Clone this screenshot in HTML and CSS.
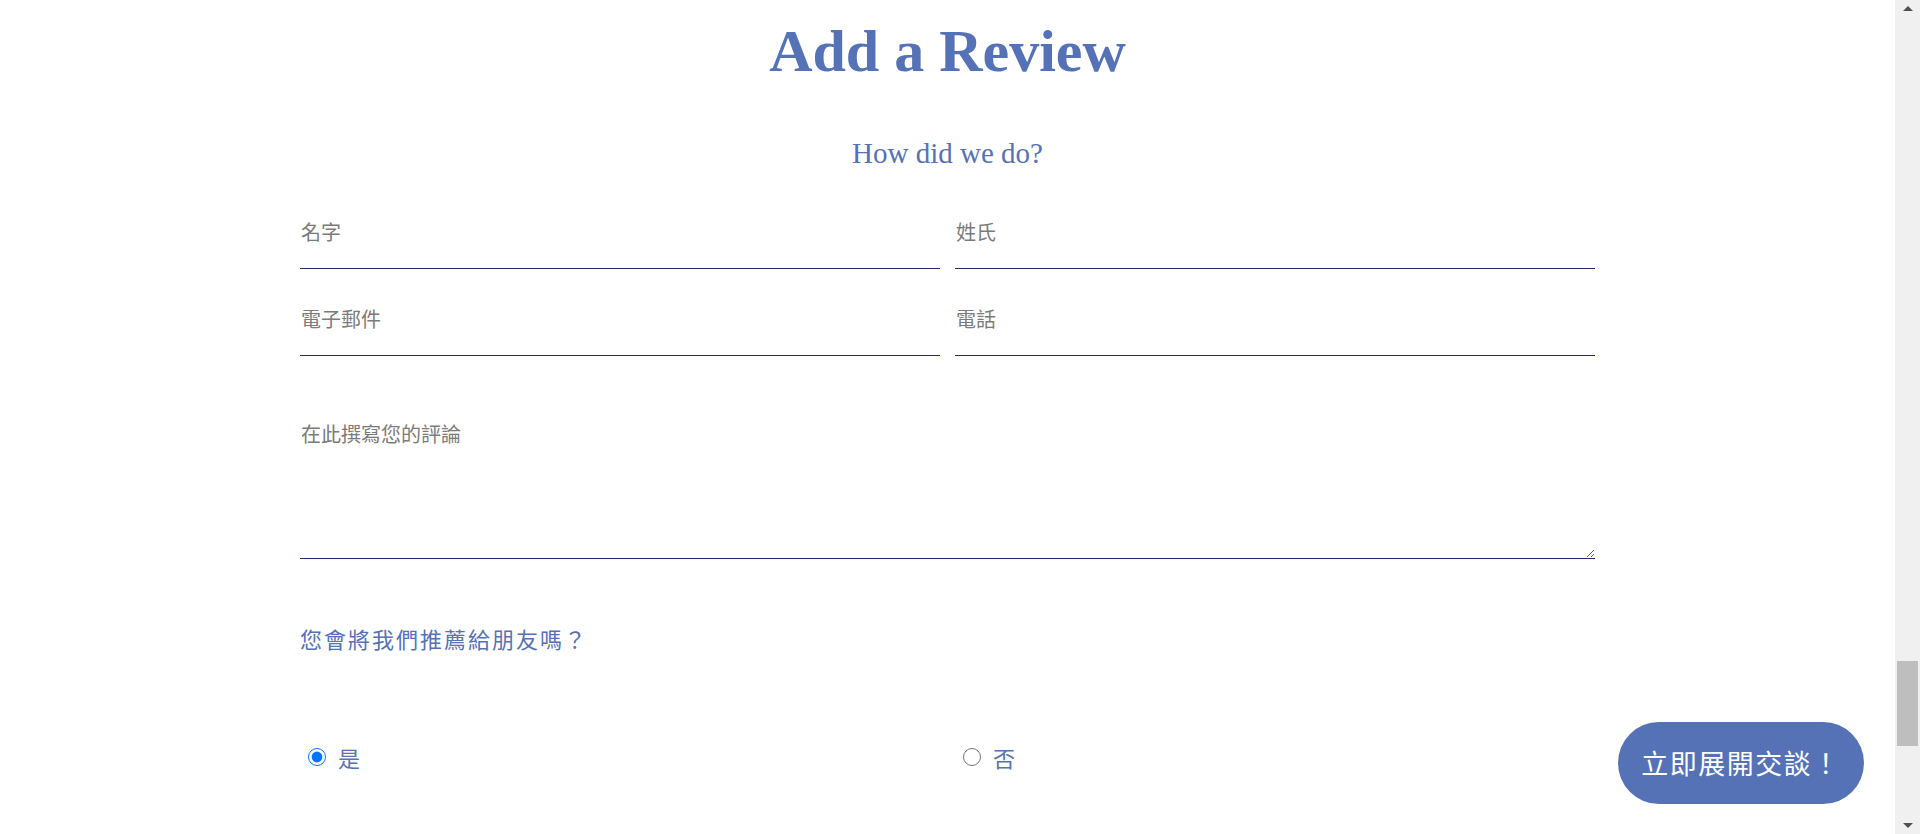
FILE: index.html
```html
<!DOCTYPE html>
<html lang="zh-Hant">
<head>
<meta charset="utf-8">
<title>Add a Review</title>
<link rel="stylesheet" href="styles.css">
</head>
<body>
<div class="page">
  <main class="content">
    <section class="review">
      <h1 class="title">Add a Review</h1>
      <p class="subtitle">How did we do?</p>
      <form class="form">
        <div class="row row-first">
          <input class="field" type="text" placeholder="名字">
          <input class="field" type="text" placeholder="姓氏">
        </div>
        <div class="row row-second">
          <input class="field" type="email" placeholder="電子郵件">
          <input class="field" type="tel" placeholder="電話">
        </div>
        <textarea class="field area" placeholder="在此撰寫您的評論"></textarea>
        <p class="question">您會將我們推薦給朋友嗎？</p>
        <div class="row radios">
          <label class="choice"><input class="radio" type="radio" name="rec" checked><span>是</span></label>
          <label class="choice"><input class="radio" type="radio" name="rec"><span>否</span></label>
        </div>
      </form>
    </section>
  </main>
  <div class="scrollbar">
    <div class="sb-btn"><span class="arrow-up"></span></div>
    <div class="sb-track"><div class="sb-thumb"></div></div>
    <div class="sb-btn"><span class="arrow-down"></span></div>
  </div>
</div>
<button class="chat" type="button">立即展開交談！</button>
</body>
</html>
```
FILE: styles.css
```css
html, body {
  margin: 0;
  padding: 0;
  height: 834px;
  overflow: hidden;
  background: #ffffff;
}

.page {
  display: flex;
  height: 834px;
}

.content {
  flex: 1;
  min-width: 0;
}

.review {
  width: 1295px;
  margin: 0 auto;
}

.title {
  margin: 16px 0 0;
  font: bold 60px/70px "Liberation Serif", "Times New Roman", serif;
  color: #5672b6;
  text-align: center;
}

.subtitle {
  margin: 50px 0 0;
  font: 29px/34px "Liberation Serif", "Times New Roman", serif;
  color: #5672b6;
  text-align: center;
}

.form {
  margin: 0;
}

.row {
  display: grid;
  grid-template-columns: 1fr 1fr;
  column-gap: 15px;
}

.row-first {
  margin-top: 30px;
}

.row-second {
  margin-top: 18px;
}

.field {
  display: block;
  width: 100%;
  box-sizing: border-box;
  height: 69px;
  margin: 0;
  padding: 17px 2px 22px 1px;
  border: 0;
  border-bottom: 1px solid #1f2d6c;
  border-radius: 0;
  background: transparent;
  outline: none;
  font: 20px/29px "Noto Sans CJK TC", "Noto Sans", sans-serif;
  color: #333333;
}

.field::placeholder {
  color: #7b7b7b;
  opacity: 1;
}

.area {
  margin-top: 46px;
  height: 157px;
  padding: 17px 2px 0 1px;
  resize: vertical;
}

.question {
  margin: 63px 0 0;
  font: 22px/32px "Noto Sans CJK TC", "Noto Sans", sans-serif;
  letter-spacing: 2px;
  color: #5672b6;
}

.radios {
  margin-top: 87px;
}

.choice {
  display: flex;
  align-items: center;
  height: 32px;
  font: 22px/32px "Noto Sans CJK TC", "Noto Sans", sans-serif;
  color: #5672b6;
}

.radio {
  width: 18px;
  height: 18px;
  margin: 0 12px 0 8px;
}

.scrollbar {
  width: 25px;
  flex: none;
  display: flex;
  flex-direction: column;
  background: #f0f0f0;
}

.sb-btn {
  height: 17px;
  display: flex;
  align-items: center;
  justify-content: center;
}

.arrow-up {
  width: 0;
  height: 0;
  border-left: 5px solid transparent;
  border-right: 5px solid transparent;
  border-bottom: 5px solid #505050;
}

.arrow-down {
  width: 0;
  height: 0;
  border-left: 5px solid transparent;
  border-right: 5px solid transparent;
  border-top: 5px solid #505050;
}

.sb-track {
  flex: 1;
}

.sb-thumb {
  margin: 644px 2px 0;
  height: 85px;
  background: #bebebe;
}

.chat {
  position: fixed;
  right: 56px;
  bottom: 30px;
  width: 246px;
  height: 82px;
  padding: 0;
  border: 0;
  border-radius: 41px;
  background: #5672b6;
  color: #ffffff;
  font: 27px/82px "Noto Sans CJK TC", "Noto Sans", sans-serif;
  letter-spacing: 1.5px;
  text-align: center;
  cursor: pointer;
}
```
